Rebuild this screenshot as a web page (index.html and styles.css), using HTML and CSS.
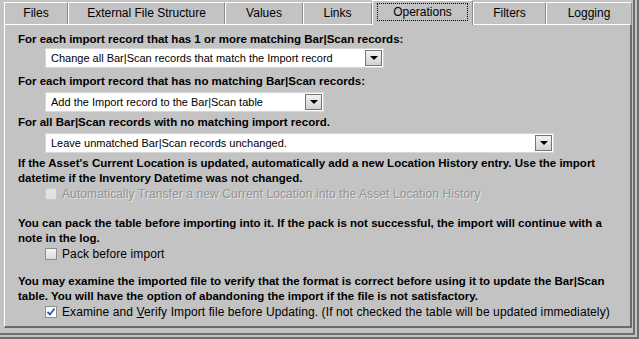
FILE: index.html
```html
<!DOCTYPE html>
<html lang="en">
<head>
    <meta charset="UTF-8">
    <title>Import Options - Operations</title>
    <link rel="stylesheet" href="styles.css">
</head>
<body>

    <div class="dialog">

        <!-- Onglets -->
        <div class="tabs">
            <div class="tab tab-files">Files</div>
            <div class="tab tab-structure">External File Structure</div>
            <div class="tab tab-values">Values</div>
            <div class="tab tab-links">Links</div>
            <div class="tab tab-ops tab-active"><span class="focus">Operations</span></div>
            <div class="tab tab-filters">Filters</div>
            <div class="tab tab-logging">Logging</div>
        </div>

        <!-- Page Operations -->
        <div class="panel">
            <div class="label">For each import record that has 1 or more matching Bar|Scan records:</div>
            <div class="combo combo-1">
                <span class="combo-text">Change all Bar|Scan records that match the Import record</span>
                <span class="combo-btn"><span class="arrow"></span></span>
            </div>

            <div class="label label-2">For each import record that has no matching Bar|Scan records:</div>
            <div class="combo combo-2">
                <span class="combo-text">Add the Import record to the Bar|Scan table</span>
                <span class="combo-btn"><span class="arrow"></span></span>
            </div>

            <div class="label label-3">For all Bar|Scan records with no matching import record.</div>
            <div class="combo combo-3">
                <span class="combo-text">Leave unmatched Bar|Scan records unchanged.</span>
                <span class="combo-btn"><span class="arrow"></span></span>
            </div>

            <p class="note note-1">If the Asset's Current Location is updated, automatically add a new Location History entry. Use the import datetime if the Inventory Datetime was not changed.</p>
            <div class="check-row disabled">
                <span class="check"></span>
                <span class="check-label">Automatically Transfer a new Current Location into the Asset Location History</span>
            </div>

            <p class="note note-2">You can pack the table before importing into it. If the pack is not successful, the import will continue with a note in the log.</p>
            <div class="check-row">
                <span class="check"></span>
                <span class="check-label">Pack before import</span>
            </div>

            <p class="note note-3">You may examine the imported file to verify that the format is correct before using it to update the Bar|Scan table. You will have the option of abandoning the import if the file is not satisfactory.</p>
            <div class="check-row">
                <span class="check checked">
                    <svg width="10" height="10" viewBox="0 0 10 10">
                        <path d="M1.5 5 L4 7.5 L8.5 1.5" fill="none" stroke="#2d56b8" stroke-width="1.8"/>
                    </svg>
                </span>
                <span class="check-label">Examine and <u>V</u>erify Import file before Updating. (If not checked the table will be updated immediately)</span>
            </div>
        </div>

    </div>

</body>
</html>
```

FILE: styles.css
```css
body {
    margin: 0;
    background-color: #c3c3c3;
    font-family: "Liberation Sans", Arial, sans-serif;
    color: #000;
}
.dialog {
    width: 639px;
    height: 339px;
    box-sizing: border-box;
    border-right: 6px double #6e6e6e;
    border-bottom: 6px double #6e6e6e;
    background-color: #c3c3c3;
    overflow: hidden;
}

/* Onglets */
.tabs {
    display: flex;
    height: 24px;
    margin-left: 4px;
}
.tab {
    box-sizing: border-box;
    height: 22px;
    margin-top: 2px;
    border-left: 1px solid #ffffff;
    border-top: 1px solid #ffffff;
    border-right: 1px solid #8a8a8a;
    font-size: 12px;
    line-height: 21px;
    text-align: center;
}
.tab-files { width: 64px; }
.tab-structure { width: 157px; }
.tab-values { width: 78px; }
.tab-links { width: 69px; }
.tab-ops { width: 101px; }
.tab-filters { width: 73px; }
.tab-logging { width: 86px; }
.tab-active {
    position: relative;
    z-index: 1;
    height: 25px;
    margin-top: 0;
    background-color: #c3c3c3;
    padding: 2px 4px 0 4px;
    line-height: 16px;
}
.focus {
    display: block;
    border: 1px dotted #000;
    height: 16px;
}

/* Panneau */
.panel {
    box-sizing: border-box;
    width: 628px;
    height: 304px;
    margin-left: 4px;
    border-left: 1px solid #ffffff;
    border-top: 1px solid #ffffff;
    border-right: 2px solid #6a6a6a;
    border-bottom: 2px solid #6a6a6a;
    padding: 7px 8px 0 13px;
}
.label {
    font-size: 11.5px;
    font-weight: bold;
    line-height: 15px;
    white-space: nowrap;
}
.label-2 { margin-top: 6px; }
.label-3 { margin-top: 3px; }

/* Listes déroulantes */
.combo {
    display: flex;
    align-items: center;
    box-sizing: border-box;
    height: 20px;
    margin-left: 27px;
    margin-top: 3px;
    background-color: #ffffff;
    border: 1px solid #d8d8d8;
    padding: 0 1px 0 5px;
}
.combo-1 { width: 339px; margin-top: 1px; }
.combo-2 { width: 279px; }
.combo-3 { width: 509px; }
.combo-text {
    flex: 1;
    font-size: 11px;
    white-space: nowrap;
    overflow: hidden;
}
.combo-btn {
    display: flex;
    align-items: center;
    justify-content: center;
    box-sizing: border-box;
    width: 17px;
    height: 16px;
    border: 1px solid #767676;
    background: linear-gradient(#f2f2f2, #d2d2d2);
}
.arrow {
    width: 0;
    height: 0;
    border-left: 4px solid transparent;
    border-right: 4px solid transparent;
    border-top: 4px solid #000;
}

/* Textes */
.note {
    margin: 3px 0 0 0;
    font-size: 11.5px;
    font-weight: bold;
    line-height: 15px;
}
.note-2 { margin-top: 15px; }
.note-3 { margin-top: 13px; }

/* Cases à cocher */
.check-row {
    display: flex;
    align-items: center;
    height: 15px;
    margin-left: 27px;
    font-size: 12px;
    letter-spacing: 0.1px;
}
.check {
    display: flex;
    align-items: center;
    justify-content: center;
    box-sizing: border-box;
    width: 12px;
    height: 12px;
    margin-right: 5px;
    border: 1px solid #8c8c8c;
    background: linear-gradient(#f4f4f4, #dcdcdc);
}
.check.checked {
    background: #ffffff;
}
.disabled .check {
    border-color: #c8c8c8;
    background: #e2e2e2;
}
.disabled .check-label {
    color: #939393;
    text-shadow: 1px 1px 0 #e4e4e4;
}
.check-label {
    white-space: nowrap;
}
```
